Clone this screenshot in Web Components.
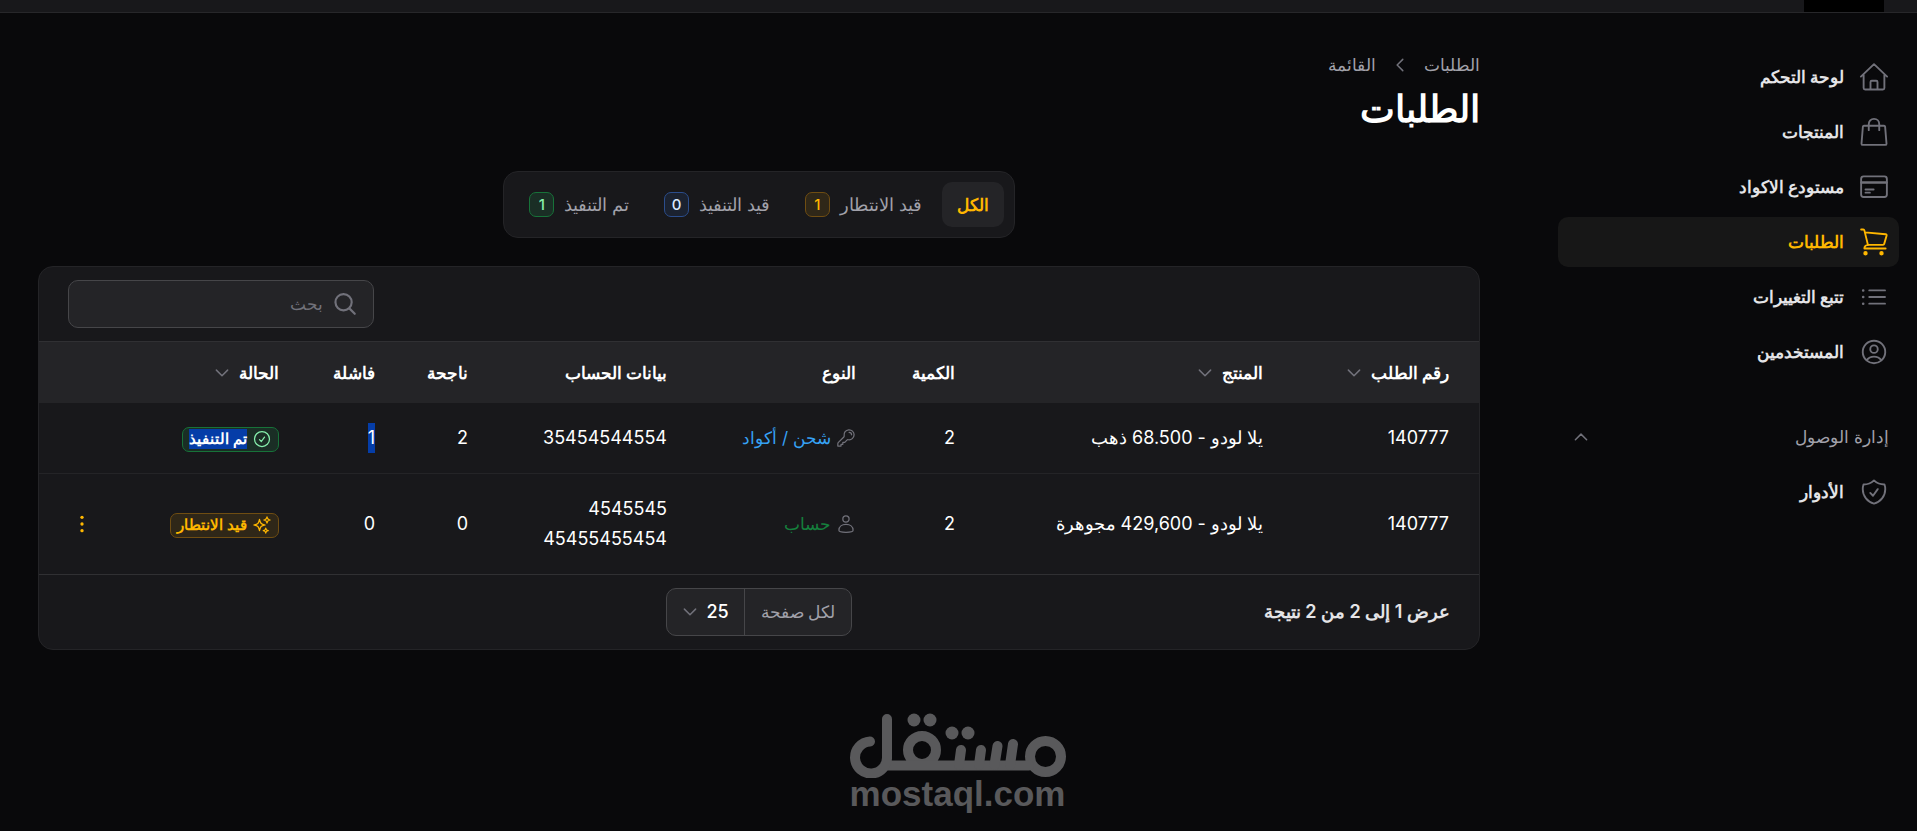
<!DOCTYPE html>
<html lang="ar" dir="rtl">
<head>
<meta charset="utf-8">
<meta name="viewport" content="width=device-width, initial-scale=1">
<title>الطلبات</title>
<style>
  body {
    margin: 0;
    min-height: 100vh;
    background: #09090b;
    color: #fff;
    font-family: Inter, "Noto Sans", sans-serif;
    font-size: 17px;
    line-height: 30px;
  }
  .layout {
    display: flex;
    align-items: flex-start;
  }
  .layout main {
    flex: 1;
    min-width: 0;
    padding: 37px 0 15px 38px;
  }
</style>
</head>
<body>
<top-bar></top-bar>
<div class="layout">
  <side-bar>
    <nav-item icon="home">لوحة التحكم</nav-item>
    <nav-item icon="bag">المنتجات</nav-item>
    <nav-item icon="card">مستودع الاكواد</nav-item>
    <nav-item icon="cart" active>الطلبات</nav-item>
    <nav-item icon="list">تتبع التغييرات</nav-item>
    <nav-item icon="user">المستخدمين</nav-item>
    <nav-group label="إدارة الوصول">
      <nav-item icon="shield">الأدوار</nav-item>
    </nav-group>
  </side-bar>
  <main>
    <page-header></page-header>
    <status-tabs>
      <status-tab active>الكل</status-tab>
      <status-tab count="1" color="amber">قيد الانتطار</status-tab>
      <status-tab count="0" color="blue">قيد التنفيذ</status-tab>
      <status-tab count="1" color="green">تم التنفيذ</status-tab>
    </status-tabs>
    <orders-table></orders-table>
    <brand-mark></brand-mark>
  </main>
</div>

<script>
const ICONS = {
  home: '<path d="M1.5 11.700 12 1.700l10.500 10M3.700 10.200v10.600c0 .7.500 1.200 1.200 1.200h14.200c.7 0 1.200-.5 1.200-1.200V10.200M9.200 22v-6c0-.6.4-1 1-1h3.600c.6 0 1 .4 1 1v6"/>',
  bag: '<path d="M4 7h16c.5 0 .8.300.9.800l1.100 13.500c0 .6-.4 1-1 1H3c-.6 0-1-.4-1-1L3.100 7.800c.1-.5.4-.8.900-.8ZM7.800 10.500V5.700c0-2.300 1.700-4.200 4.200-4.200s4.200 1.900 4.200 4.200v4.800"/>',
  card: '<rect x="1.700" y="3.500" width="20.600" height="16.500" rx="2"/><path d="M2 8.400h20" stroke-width="2"/><path d="M5.200 14h6.500M5.200 16.500h3.500"/>',
  cart: '<path d="M1.700 2h1.700c.5 0 .8.300.9.700L7.200 14.500M4.900 4.300l16.400 1.500c.6.100.9.500.800 1l-2 6.900c-.1.400-.4.600-.8.600H7.300c-1.900.2-3 1.300-3 2.900h17"/><circle cx="5.200" cy="21" r="1" fill="currentColor"/><circle cx="18" cy="21" r="1" fill="currentColor"/>',
  list: '<path d="M8.200 6.700h12.600M8.200 12h12.600M8.200 17.300h12.600"/><path d="M3.300 6.700h.1M3.300 12h.1M3.300 17.300h.1" stroke-width="2"/>',
  user: '<path d="M18 18.700A7.500 7.500 0 0 0 12 15.700a7.500 7.500 0 0 0-6 3m12 0a9 9 0 1 0-12 0m12 0A9 9 0 0 1 12 21a9 9 0 0 1-6-2.300M15 9.700a3 3 0 1 1-6 0 3 3 0 0 1 6 0Z"/>',
  shield: '<path d="M9 12.700 11.200 15 15 9.700M12 2.700A12 12 0 0 1 3.600 6 12 12 0 0 0 3 9.700c0 5.600 3.800 10.300 9 11.600 5.200-1.300 9-6 9-11.600 0-1.300-.2-2.600-.6-3.700h-.2A12 12 0 0 1 12 2.700Z"/>',
  search: '<path d="m21 21-5.200-5.200m0 0A7.500 7.500 0 1 0 5.200 5.200a7.500 7.500 0 0 0 10.600 10.600Z"/>',
  down: '<path d="m19.500 8.200-7.500 7.500-7.500-7.500"/>',
  up: '<path d="m4.500 15.700 7.500-7.500 7.500 7.500"/>',
  left: '<path d="M15.700 19.500 8.200 12l7.500-7.500"/>',
  key: '<path d="M15.700 5.200a3 3 0 0 1 3 3m3 0a6 6 0 0 1-7 5.900c-.6-.1-1.200 0-1.600.4l-2.600 2.700H8.200v2.300H6v2.200H2.200v-2.800c0-.6.300-1.200.7-1.600l6.500-6.500c.4-.4.500-1 .4-1.600a6 6 0 1 1 11.900-1Z"/>',
  person: '<path d="M15.700 6a3.700 3.700 0 1 1-7.500 0 3.700 3.700 0 0 1 7.500 0ZM3.500 19.500c0-4.300 3.500-7 8.500-7s8.500 2.700 8.500 7c0 1.600-4.500 2.500-8.500 2.500s-8.500-.9-8.500-2.500Z"/>',
  check: '<path d="M9 12.700 11.200 15 15 9.700M21 12a9 9 0 1 1-18 0 9 9 0 0 1 18 0Z"/>',
  sparkles: '<path d="M9.800 15.900 9 18.700l-.8-2.800a4.500 4.500 0 0 0-3.100-3.100L2.200 12l2.900-.8a4.500 4.500 0 0 0 3.100-3.100L9 5.200l.8 2.900a4.500 4.500 0 0 0 3.100 3.100l2.800.8-2.800.8a4.500 4.500 0 0 0-3.100 3.100ZM18.300 8.700 18 9.700l-.3-1a3.400 3.400 0 0 0-2.400-2.400L14.200 6l1.100-.3a3.400 3.400 0 0 0 2.400-2.400l.3-1 .3 1a3.400 3.400 0 0 0 2.400 2.400l1 .3-1 .3a3.400 3.400 0 0 0-2.400 2.400ZM16.900 20.600l-.4 1.200-.4-1.200a2.200 2.200 0 0 0-1.400-1.400l-1.200-.4 1.200-.4a2.200 2.200 0 0 0 1.400-1.400l.4-1.200.4 1.200a2.200 2.200 0 0 0 1.400 1.400l1.200.4-1.200.4a2.200 2.200 0 0 0-1.400 1.400Z"/>',
  dots: '<g fill="currentColor" stroke="none"><circle cx="12" cy="4" r="2"/><circle cx="12" cy="12" r="2"/><circle cx="12" cy="20" r="2"/></g>'
};

class AppIcon extends HTMLElement {
  connectedCallback() {
    this.attachShadow({ mode: 'open' });
    this.shadowRoot.innerHTML = `
      <style>
        :host {
          display: inline-block;
          flex: none;
          width: var(--icon-size, 20px);
          height: var(--icon-size, 20px);
        }
        svg {
          display: block;
          width: 100%;
          height: 100%;
          fill: none;
          stroke: currentColor;
          stroke-width: var(--icon-stroke, 1.5);
          stroke-linecap: round;
          stroke-linejoin: round;
        }
      </style>
      <svg viewBox="0 0 24 24" aria-hidden="true">${ICONS[this.getAttribute('name')]}</svg>
    `;
  }
}

class TopBar extends HTMLElement {
  connectedCallback() {
    this.attachShadow({ mode: 'open' });
    this.shadowRoot.innerHTML = `
      <style>
        :host {
          display: block;
          height: 12px;
          padding-inline-start: 33px;
          background: #18181b;
          border-bottom: 1px solid #27272a;
        }
        .logo {
          width: 80px;
          height: 12px;
          background: #000;
        }
      </style>
      <div class="logo"></div>
    `;
  }
}

class SideBar extends HTMLElement {
  connectedCallback() {
    this.attachShadow({ mode: 'open' });
    this.shadowRoot.innerHTML = `
      <style>
        :host {
          display: block;
          flex: none;
          width: 341px;
          padding: 39px 18px 0 78px;
        }
        nav {
          display: flex;
          flex-direction: column;
          gap: 5px;
        }
      </style>
      <nav><slot></slot></nav>
    `;
  }
}

class NavItem extends HTMLElement {
  connectedCallback() {
    this.attachShadow({ mode: 'open' });
    this.shadowRoot.innerHTML = `
      <style>
        :host { display: block; }
        a {
          display: flex;
          align-items: center;
          gap: 15px;
          padding: 10px;
          border-radius: 10px;
          color: #e4e4e7;
          font-weight: 600;
          text-decoration: none;
        }
        app-icon {
          --icon-size: 30px;
          color: #71717a;
        }
        :host([active]) a { background: #171717; }
        :host([active]) a, :host([active]) app-icon { color: #ffb700; }
      </style>
      <a href="#"><app-icon name="${this.getAttribute('icon')}"></app-icon><slot></slot></a>
    `;
  }
}

class NavGroup extends HTMLElement {
  connectedCallback() {
    this.attachShadow({ mode: 'open' });
    this.shadowRoot.innerHTML = `
      <style>
        :host {
          display: block;
          padding-top: 30px;
        }
        button {
          display: flex;
          align-items: center;
          justify-content: space-between;
          width: 100%;
          margin: 0 0 5px;
          padding: 10px;
          border: 0;
          background: none;
          color: #a1a1aa;
          font: inherit;
          font-weight: 500;
        }
        app-icon {
          --icon-size: 18px;
          --icon-stroke: 2;
          margin-inline-end: 4px;
          color: #71717a;
        }
      </style>
      <button type="button" aria-expanded="true">${this.getAttribute('label')}<app-icon name="up"></app-icon></button>
      <slot></slot>
    `;
  }
}

class PageHeader extends HTMLElement {
  connectedCallback() {
    this.attachShadow({ mode: 'open' });
    this.shadowRoot.innerHTML = `
      <style>
        :host { display: block; }
        nav {
          display: flex;
          align-items: center;
          gap: 15px;
        }
        a {
          color: #a1a1aa;
          font-weight: 500;
          text-decoration: none;
        }
        app-icon {
          --icon-size: 18px;
          --icon-stroke: 2;
          color: #71717a;
        }
        h1 {
          margin: 6px 0 0;
          font-size: 37px;
          line-height: 46px;
          font-weight: 700;
        }
      </style>
      <nav>
        <a href="#">الطلبات</a>
        <app-icon name="left"></app-icon>
        <a href="#">القائمة</a>
      </nav>
      <h1>الطلبات</h1>
    `;
  }
}

class StatusTabs extends HTMLElement {
  connectedCallback() {
    this.attachShadow({ mode: 'open' });
    this.shadowRoot.innerHTML = `
      <style>
        :host {
          display: flex;
          gap: 5px;
          width: fit-content;
          margin: 39px auto 28px;
          padding: 10px;
          background: #18181b;
          border: 1px solid #242427;
          border-radius: 15px;
          font-size: 18px;
        }
      </style>
      <slot></slot>
    `;
  }
}

class StatusTab extends HTMLElement {
  connectedCallback() {
    const count = this.getAttribute('count');
    this.attachShadow({ mode: 'open' });
    this.shadowRoot.innerHTML = `
      <style>
        :host { display: block; }
        button {
          display: flex;
          align-items: center;
          gap: 10px;
          height: 45px;
          padding: 0 15px;
          border: 0;
          border-radius: 10px;
          background: none;
          color: #a1a1aa;
          font: inherit;
          font-weight: 500;
        }
        :host([active]) button {
          background: #242427;
          color: #ffb700;
          font-size: 17px;
          font-weight: 600;
        }
      </style>
      <button type="button"><slot></slot>${count ? `<app-badge square color="${this.getAttribute('color')}">${count}</app-badge>` : ''}</button>
    `;
  }
}

class AppBadge extends HTMLElement {
  connectedCallback() {
    const icon = this.getAttribute('icon');
    this.attachShadow({ mode: 'open' });
    this.shadowRoot.innerHTML = `
      <style>
        :host {
          display: inline-flex;
          align-items: center;
          justify-content: center;
          gap: 5px;
          box-sizing: border-box;
          height: 25px;
          padding: 0 6px;
          border: 1px solid;
          border-radius: 7px;
          font-size: 15px;
          line-height: 20px;
          font-weight: 600;
          vertical-align: middle;
        }
        :host([square]) {
          width: 25px;
          padding: 0;
          font-weight: 500;
        }
        :host([color=amber]) { background: #2f2718; border-color: #6f4d12; color: #ffb700; }
        :host([color=blue]) { background: #1b2230; border-color: #2b4d8c; color: #dbeafe; }
        :host([color=green]) { background: #1a2e25; border-color: #177239; color: #86efac; }
        app-icon { --icon-size: 20px; }
      </style>
      ${icon ? `<app-icon name="${icon}"></app-icon>` : ''}<slot></slot>
    `;
  }
}

class OrdersTable extends HTMLElement {
  connectedCallback() {
    this.attachShadow({ mode: 'open' });
    this.shadowRoot.innerHTML = `
      <style>
        :host {
          display: block;
          background: #18181b;
          border: 1px solid #242427;
          border-radius: 15px;
          overflow: hidden;
        }
        .toolbar {
          display: flex;
          justify-content: flex-end;
          padding: 13px 29px;
        }
        .search {
          display: flex;
          align-items: center;
          gap: 9px;
          box-sizing: border-box;
          width: 306px;
          height: 48px;
          padding: 0 15px;
          background: #242427;
          border: 1px solid #464649;
          border-radius: 10px;
        }
        .search app-icon {
          --icon-size: 26px;
          --icon-stroke: 2;
          color: #71717a;
        }
        input {
          flex: 1;
          min-width: 0;
          padding: 0;
          border: 0;
          outline: 0;
          background: none;
          color: #fff;
          font: inherit;
        }
        input::placeholder { color: #71717a; opacity: 1; }
        table {
          width: 100%;
          table-layout: fixed;
          border-collapse: separate;
          border-spacing: 0;
        }
        th, td {
          padding: 0 15px;
          text-align: start;
        }
        th:first-child, td:first-child { padding-inline-start: 30px; }
        th {
          height: 61px;
          background: #242427;
          border-top: 1px solid #303033;
          font-weight: 600;
          white-space: nowrap;
        }
        td {
          height: 70px;
          border-bottom: 1px solid #242427;
          font-size: 18px;
        }
        tr:last-child td {
          height: 100px;
          border-color: #303033;
        }
        th button {
          display: flex;
          align-items: center;
          gap: 8px;
          padding: 0;
          border: 0;
          background: none;
          color: inherit;
          font: inherit;
        }
        th app-icon {
          --icon-size: 18px;
          --icon-stroke: 2;
          color: #71717a;
        }
        .type {
          display: flex;
          align-items: center;
          gap: 5px;
          font-size: 17px;
        }
        .type app-icon { color: #71717a; }
        .blue { color: #36a2f5; }
        .green { color: #15803d; }
        .marked {
          display: inline-block;
          background: #053da8;
          color: #fff;
        }
        td.actions { padding-inline: 0 30px; }
        .actions button {
          display: flex;
          align-items: center;
          justify-content: center;
          width: 25px;
          height: 25px;
          margin-inline-start: auto;
          padding: 0;
          border: 0;
          background: none;
          color: #ffb700;
        }
        .footer {
          display: grid;
          grid-template-columns: 1fr auto 1fr;
          align-items: center;
          padding: 13px 29px;
          color: #e4e4e7;
          font-size: 18px;
          font-weight: 600;
        }
        .per-page {
          display: flex;
          align-items: center;
          height: 46px;
          background: #242427;
          border: 1px solid #464649;
          border-radius: 10px;
          color: #fff;
          font-weight: 500;
        }
        .per-page label {
          padding: 8px 16px;
          border-inline-end: 1px solid #464649;
          color: #a1a1aa;
          font-size: 17px;
          font-weight: 400;
        }
        .select {
          display: grid;
          align-items: center;
          width: 77px;
        }
        .select > * { grid-area: 1 / 1; }
        .select app-icon {
          --icon-size: 18px;
          --icon-stroke: 2;
          justify-self: end;
          margin-inline-end: 14px;
          color: #71717a;
        }
        select {
          appearance: none;
          width: 100%;
          height: 44px;
          padding: 0 15px;
          border: 0;
          background: none;
          color: inherit;
          font: inherit;
        }
      </style>
      <div class="toolbar">
        <div class="search">
          <app-icon name="search"></app-icon>
          <input type="search" placeholder="بحث" aria-label="بحث">
        </div>
      </div>
      <table>
        <colgroup>
          <col style="width: 201px"><col style="width: 308px"><col style="width: 99px">
          <col style="width: 189px"><col style="width: 199px"><col style="width: 93px">
          <col style="width: 96px"><col style="width: 155px"><col style="width: 100px">
        </colgroup>
        <thead>
          <tr>
            <th><button type="button">رقم الطلب<app-icon name="down"></app-icon></button></th>
            <th><button type="button">المنتج<app-icon name="down"></app-icon></button></th>
            <th>الكمية</th>
            <th>النوع</th>
            <th>بيانات الحساب</th>
            <th>ناجحة</th>
            <th>فاشلة</th>
            <th><button type="button">الحالة<app-icon name="down"></app-icon></button></th>
            <th></th>
          </tr>
        </thead>
        <tbody>
          <tr>
            <td>140777</td>
            <td>يلا لودو - 68.500 ذهب</td>
            <td>2</td>
            <td><div class="type"><app-icon name="key"></app-icon><span class="blue">شحن / أكواد</span></div></td>
            <td>35454544554</td>
            <td>2</td>
            <td><span class="marked">1</span></td>
            <td><app-badge icon="check" color="green"><span class="marked">تم التنفيذ</span></app-badge></td>
            <td></td>
          </tr>
          <tr>
            <td>140777</td>
            <td>يلا لودو - 429,600 مجوهرة</td>
            <td>2</td>
            <td><div class="type"><app-icon name="person"></app-icon><span class="green">حساب</span></div></td>
            <td>4545545<br>45455455454</td>
            <td>0</td>
            <td>0</td>
            <td><app-badge icon="sparkles" color="amber">قيد الانتطار</app-badge></td>
            <td class="actions"><button type="button" aria-label="إجراءات"><app-icon name="dots"></app-icon></button></td>
          </tr>
        </tbody>
      </table>
      <div class="footer">
        <span>عرض 1 إلى 2 من 2 نتيجة</span>
        <div class="per-page">
          <label for="per-page">لكل صفحة</label>
          <div class="select">
            <select id="per-page"><option>25</option></select>
            <app-icon name="down"></app-icon>
          </div>
        </div>
      </div>
    `;
  }
}

class BrandMark extends HTMLElement {
  connectedCallback() {
    this.attachShadow({ mode: 'open' });
    // negative start margin spans the sidebar, so the mark centres on the window
    this.shadowRoot.innerHTML = `
      <style>
        :host {
          display: flex;
          flex-direction: column;
          align-items: center;
          margin-top: 63px;
          margin-inline-start: -397px;
          color: #59595b;
        }
        svg {
          display: block;
          width: 216px;
          height: 65px;
        }
        span {
          font: 700 35px/32px "Liberation Sans", Arial, sans-serif;
        }
      </style>
      <svg viewBox="0 0 216 65" fill="none" stroke="currentColor" stroke-width="10" stroke-linecap="round" role="img" aria-label="مستقل">
        <circle cx="195.500" cy="43.500" r="15.500"/>
        <circle cx="72" cy="37" r="14"/>
        <path d="M37 52.500h142"/>
        <path d="M37 6v37.500A16 16 0 1 1 20 28.500"/>
        <path d="m111 37-2 15M131 37l-2 15M147.500 33l-3 19M163 31l-3 21"/>
        <g fill="currentColor" stroke="none">
          <circle cx="64" cy="7" r="6.500"/><circle cx="80" cy="7" r="6.500"/>
          <circle cx="102" cy="20" r="6.500"/><circle cx="118" cy="20" r="6.500"/>
        </g>
      </svg>
      <span dir="ltr">mostaql.com</span>
    `;
  }
}

customElements.define('app-icon', AppIcon);
customElements.define('app-badge', AppBadge);
customElements.define('top-bar', TopBar);
customElements.define('side-bar', SideBar);
customElements.define('nav-item', NavItem);
customElements.define('nav-group', NavGroup);
customElements.define('page-header', PageHeader);
customElements.define('status-tabs', StatusTabs);
customElements.define('status-tab', StatusTab);
customElements.define('orders-table', OrdersTable);
customElements.define('brand-mark', BrandMark);
</script>
</body>
</html>
